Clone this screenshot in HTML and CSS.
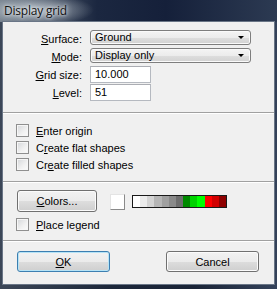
FILE: index.html
```html
<!DOCTYPE html>
<html lang="en">
<head>
  <meta charset="UTF-8" />
  <title>Display grid</title>
  <link rel="stylesheet" href="styles.css">
</head>
<body>
  <div class="window">
    <div class="titlebar"><span class="title">Display grid</span></div>

    <div class="client">
      <!-- поля -->
      <div class="fields">
        <label class="field-label"><u>S</u>urface:</label>
        <div class="select"><span>Ground</span><i class="arrow"></i></div>

        <label class="field-label"><u>M</u>ode:</label>
        <div class="select"><span>Display only</span><i class="arrow"></i></div>

        <label class="field-label"><u>G</u>rid size:</label>
        <div class="input">10.000</div>

        <label class="field-label"><u>L</u>evel:</label>
        <div class="input">51</div>
      </div>

      <div class="sep"></div>

      <div class="checks">
        <div class="check"><span class="box"></span><span><u>E</u>nter origin</span></div>
        <div class="check"><span class="box"></span><span>C<u>r</u>eate flat shapes</span></div>
        <div class="check"><span class="box"></span><span>Cr<u>e</u>ate filled shapes</span></div>
      </div>

      <div class="sep"></div>

      <div class="colors-section">
        <div class="colors-row">
          <div class="btn colors-btn"><u>C</u>olors...</div>
          <div class="swatch"></div>
          <div class="ramp">
            <span style="background:#ffffff"></span>
            <span style="background:#ececec"></span>
            <span style="background:#d4d4d4"></span>
            <span style="background:#b6b6b6"></span>
            <span style="background:#a0a0a0"></span>
            <span style="background:#8a8a8a"></span>
            <span style="background:#6e6e6e"></span>
            <span style="background:#008a00"></span>
            <span style="background:#00d200"></span>
            <span style="background:#00ff00"></span>
            <span style="background:#ff0000"></span>
            <span style="background:#d20000"></span>
            <span style="background:#8e0000"></span>
          </div>
        </div>
        <div class="check"><span class="box"></span><span><u>P</u>lace legend</span></div>
      </div>

      <div class="sep"></div>

      <div class="actions">
        <div class="btn btn-default"><u>O</u>K</div>
        <div class="btn">Cancel</div>
      </div>
    </div>
  </div>
</body>
</html>
```

FILE: styles.css
```css
html, body {
  margin: 0;
  padding: 0;
  height: 100%;
  overflow: hidden;
  font-family: 'Liberation Sans', Arial, sans-serif;
  font-size: 11px;
  color: #000;
}

.window {
  width: 277px;
  height: 289px;
  box-sizing: border-box;
  padding: 0 3px 5px 3px;
  display: flex;
  flex-direction: column;
  background: linear-gradient(90deg, #3c4758 0%, #1c273a 40%, #1a2437 70%, #34425a 100%);
}

.titlebar {
  height: 22px;
  display: flex;
  align-items: center;
  background:
    radial-gradient(ellipse 60px 16px at 34px 10px, rgba(200, 208, 214, 0.85), rgba(200, 208, 214, 0) 100%),
    linear-gradient(90deg, #6f7b88 0%, #1b2740 35%, #15203a 60%, #2c3a52 100%);
  margin: 0 -3px;
  padding: 0 4px;
}

.title {
  font-family: 'Open Sans', 'Noto Sans', sans-serif;
  font-size: 12px;
  color: #111;
  text-shadow: 0 0 6px #e6eaee, 0 0 3px #e6eaee;
  margin-top: -2px;
  letter-spacing: -0.2px;
}

.client {
  flex: 1;
  background: #f0f0f0;
  box-shadow: 0 0 0 1px #697586;
  display: flex;
  flex-direction: column;
  padding-top: 8px;
}

.fields {
  display: grid;
  grid-template-columns: 79px auto;
  column-gap: 8px;
  align-items: center;
}

.field-label {
  text-align: right;
}

.select {
  width: 161px;
  height: 15px;
  box-sizing: border-box;
  border: 1px solid #7e7e7e;
  border-radius: 3px;
  background: linear-gradient(#f4f4f4 0%, #ececec 50%, #dedede 51%, #d2d2d2 100%);
  box-shadow: inset 0 0 0 1px #fafafa;
  display: flex;
  align-items: center;
  justify-content: space-between;
  padding: 0 6px 0 4px;
  margin-bottom: 3px;
  line-height: 13px;
}

.arrow {
  width: 0;
  height: 0;
  border-left: 3px solid transparent;
  border-right: 3px solid transparent;
  border-top: 3px solid #000;
}

.input {
  width: 61px;
  height: 17px;
  box-sizing: border-box;
  border: 1px solid #b5b9c0;
  border-top-color: #abadb3;
  background: #fff;
  padding: 0 4px;
  line-height: 15px;
  margin-bottom: 1px;
}

.sep {
  height: 1px;
  background: #a0a0a0;
  border-bottom: 1px solid #fff;
}

.fields + .sep { margin-top: 10px; }

.checks {
  padding: 8px 0 0 13px;
}

.check {
  height: 17px;
  display: flex;
  align-items: center;
  gap: 7px;
}

.box {
  width: 13px;
  height: 13px;
  box-sizing: border-box;
  border: 1px solid #8f8f8f;
  box-shadow: inset 0 0 0 1px #f6f6f6;
  background: linear-gradient(135deg, #d4d6d9 0%, #f1f1f1 60%, #fbfbfb 100%);
}

.checks + .sep { margin-top: 8px; }

.colors-section {
  padding: 7px 0 0 13px;
}

.colors-row {
  display: flex;
  align-items: flex-start;
  margin-left: 1px;
  margin-bottom: 4px;
}

.btn {
  height: 22px;
  box-sizing: border-box;
  border: 1px solid #707070;
  border-radius: 3px;
  background: linear-gradient(#f2f2f2 0%, #ebebeb 50%, #dddddd 51%, #cfcfcf 100%);
  box-shadow: inset 0 0 0 1px #fbfbfb;
  display: flex;
  align-items: center;
  justify-content: center;
}

.colors-btn {
  width: 80px;
}

.swatch {
  width: 15px;
  height: 16px;
  box-sizing: border-box;
  margin: 4px 0 0 13px;
  background: #fff;
  border-top: 1px solid #e4e4e4;
  border-left: 1px solid #e4e4e4;
  border-right: 1px solid #8a8a8a;
  border-bottom: 1px solid #8a8a8a;
}

.ramp {
  width: 95px;
  height: 13px;
  box-sizing: border-box;
  margin: 5px 0 0 7px;
  border: 1px solid #1a1a1a;
  display: flex;
}

.ramp span {
  flex: 1;
}

.colors-section + .sep { margin-top: 7px; }

.actions {
  display: flex;
  justify-content: space-between;
  padding: 9px 15px 0 14px;
}

.actions .btn {
  width: 93px;
  height: 21px;
}

.btn-default {
  border-color: #3c7fb1;
  box-shadow: inset 0 0 0 1px #b6e3f6;
}
```
